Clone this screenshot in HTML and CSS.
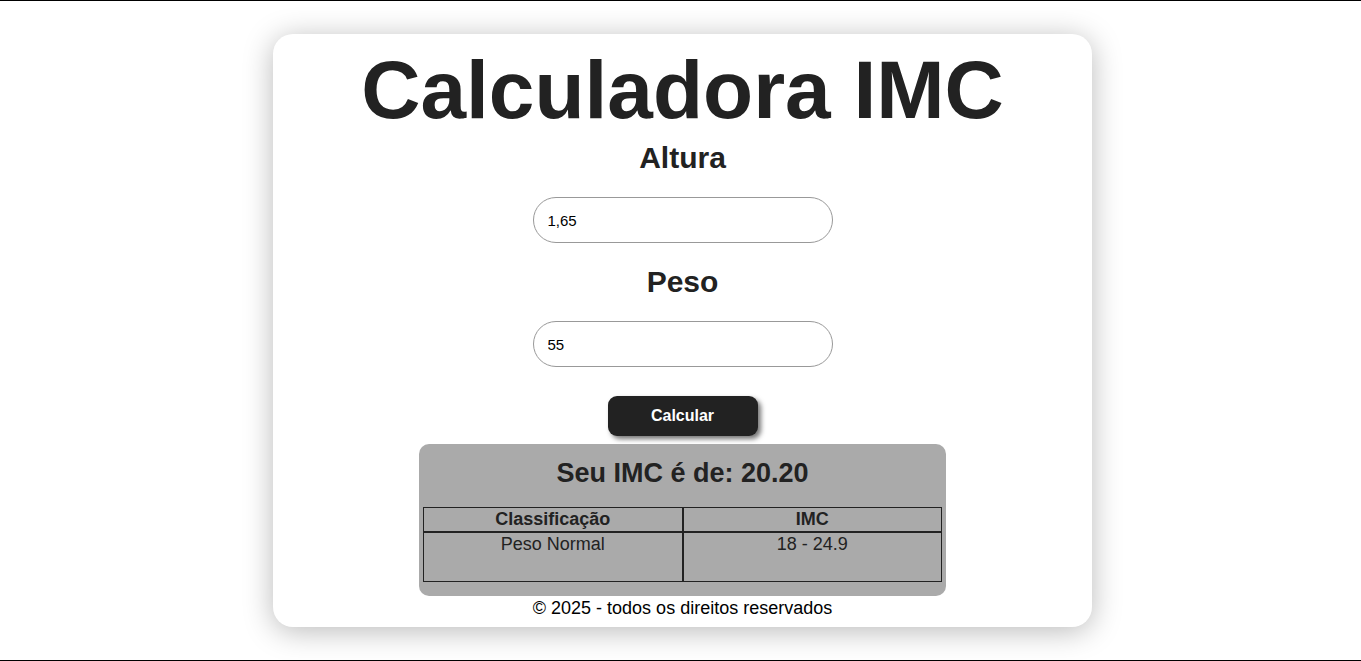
FILE: index.html
```html
<!DOCTYPE html>
<html lang="pt-BR">
<head>
<meta charset="utf-8">
<title>Calculadora IMC</title>
<link rel="stylesheet" href="styles.css">
</head>
<body>
<main class="page">
  <section class="card">
    <h1 class="title">Calculadora IMC</h1>
    <h2 class="label">Altura</h2>
    <input class="field" type="text" value="1,65">
    <h2 class="label label-gap">Peso</h2>
    <input class="field" type="text" value="55">
    <button class="btn" type="button">Calcular</button>
    <div class="result">
      <h2 class="result-title">Seu IMC é de: 20.20</h2>
      <table class="table">
        <thead>
          <tr><th>Classificação</th><th>IMC</th></tr>
        </thead>
        <tbody>
          <tr><td>Peso Normal</td><td>18 - 24.9</td></tr>
        </tbody>
      </table>
    </div>
    <footer class="footer">© 2025 - todos os direitos reservados</footer>
  </section>
</main>
</body>
</html>
```
FILE: styles.css
```css
* { box-sizing: border-box; }
html, body { margin: 0; padding: 0; }
body {
  font-family: "Liberation Sans", Arial, sans-serif;
  background: #fff;
  color: #222;
  min-height: 100vh;
  border-top: 1px solid #000;
  border-bottom: 1px solid #000;
}
.page {
  display: flex;
  justify-content: center;
  padding: 33px 0 33px 4px;
}
.card {
  width: 819px;
  background: #fff;
  border-radius: 20px;
  box-shadow: 0 4px 30px rgba(0,0,0,0.28);
  display: flex;
  flex-direction: column;
  align-items: center;
  padding: 9px 0 8px;
}
.title {
  margin: 0;
  font-size: 82px;
  font-weight: 700;
  color: #222;
}
.label {
  margin: 4px 0 22px;
  font-size: 30px;
  font-weight: 700;
  color: #222;
}
.label-gap { margin-top: 22px; }
.field {
  width: 300px;
  height: 46px;
  border: 1px solid #999;
  border-radius: 23px;
  padding: 0 14px;
  font-family: "Liberation Sans", Arial, sans-serif;
  font-size: 15px;
  color: #000;
  background: #fff;
  outline: none;
}
.btn {
  margin-top: 29px;
  width: 150px;
  height: 40px;
  border: none;
  border-radius: 9px;
  background: #222;
  color: #fff;
  font-family: "Liberation Sans", Arial, sans-serif;
  font-size: 16px;
  font-weight: 700;
  box-shadow: 3px 3px 5px rgba(0,0,0,0.55);
}
.result {
  margin-top: 8px;
  width: 527px;
  background: #aaa;
  border-radius: 10px;
  padding: 4px 4px 14px;
}
.result-title {
  margin: 10px 0 18px;
  text-align: center;
  font-size: 27px;
  font-weight: 700;
  color: #222;
}
.table {
  width: 100%;
  border-collapse: separate;
  border-spacing: 0;
  font-size: 18px;
  color: #222;
}
.table th, .table td {
  width: 50%;
  border: 1px solid #222;
  padding: 1px;
  text-align: center;
}
.table td {
  height: 50px;
  vertical-align: top;
}
.footer {
  margin-top: 2px;
  font-size: 18px;
  color: #000;
}
```
